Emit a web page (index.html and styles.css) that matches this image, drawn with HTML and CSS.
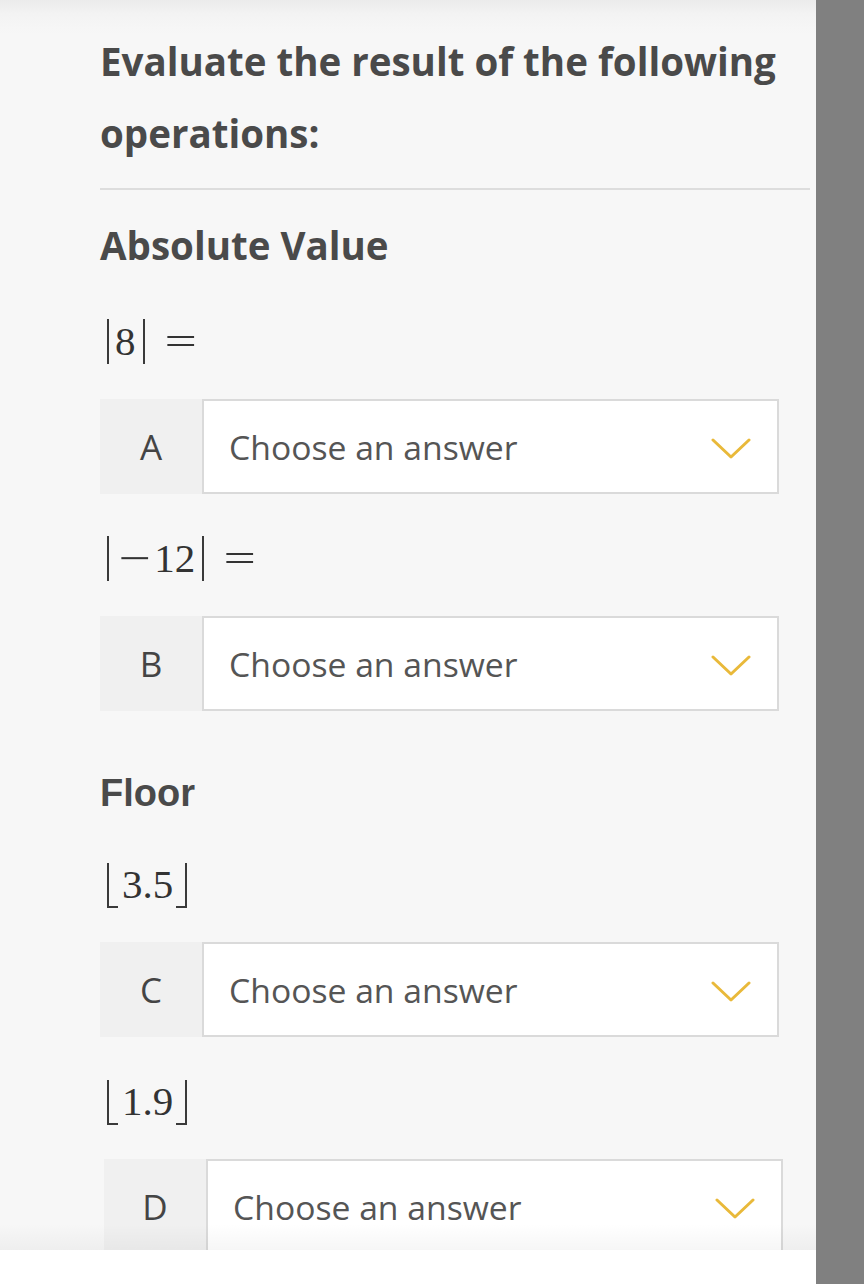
FILE: index.html
```html
<!DOCTYPE html>
<html lang="en">
<head>
<meta charset="utf-8">
<title>Evaluate</title>
<link rel="stylesheet" href="styles.css">
</head>
<body>
<div class="screen">
  <main class="page">
    <div class="content">
      <h1 class="title">Evaluate the result of the following operations:</h1>
      <hr class="divider">

      <h2 class="section">Absolute Value</h2>
      <div class="math"><span class="bar bar-l"></span>8<span class="bar bar-r"></span><span class="op eq">=</span></div>
      <div class="field">
        <div class="label">A</div>
        <div class="select"><span class="placeholder">Choose an answer</span>
          <svg class="chev" viewBox="0 0 40 22" width="40" height="22"><path d="M2 2 L20 19 L38 2" fill="none" stroke="#e9b93a" stroke-width="3" stroke-linecap="round" stroke-linejoin="round"/></svg>
        </div>
      </div>

      <div class="math math-next"><span class="bar bar-l"></span><span class="op minus">−</span>12<span class="bar bar-r"></span><span class="op eq">=</span></div>
      <div class="field">
        <div class="label">B</div>
        <div class="select"><span class="placeholder">Choose an answer</span>
          <svg class="chev" viewBox="0 0 40 22" width="40" height="22"><path d="M2 2 L20 19 L38 2" fill="none" stroke="#e9b93a" stroke-width="3" stroke-linecap="round" stroke-linejoin="round"/></svg>
        </div>
      </div>

      <h2 class="section section-alt">Floor</h2>
      <div class="math"><span class="fl fl-l"></span>3.5<span class="fl fl-r"></span></div>
      <div class="field">
        <div class="label">C</div>
        <div class="select"><span class="placeholder">Choose an answer</span>
          <svg class="chev" viewBox="0 0 40 22" width="40" height="22"><path d="M2 2 L20 19 L38 2" fill="none" stroke="#e9b93a" stroke-width="3" stroke-linecap="round" stroke-linejoin="round"/></svg>
        </div>
      </div>

      <div class="math math-next"><span class="fl fl-l"></span>1.9<span class="fl fl-r"></span></div>
      <div class="field field-shift">
        <div class="label">D</div>
        <div class="select"><span class="placeholder">Choose an answer</span>
          <svg class="chev" viewBox="0 0 40 22" width="40" height="22"><path d="M2 2 L20 19 L38 2" fill="none" stroke="#e9b93a" stroke-width="3" stroke-linecap="round" stroke-linejoin="round"/></svg>
        </div>
      </div>
    </div>
    <div class="fade"></div>
  </main>
  <aside class="rail"></aside>
</div>
</body>
</html>
```

FILE: styles.css
```css
html, body {
  margin: 0;
  padding: 0;
  background: #ffffff;
}

.screen {
  display: flex;
  width: 864px;
  height: 1284px;
  overflow: hidden;
}

.page {
  flex: 0 0 816px;
  display: flex;
  flex-direction: column;
  background: #ffffff;
}

.content {
  position: relative;
  height: 1250px;
  overflow: hidden;
  box-sizing: border-box;
  padding: 25px 6px 0 100px;
  background: linear-gradient(to bottom, #ebebeb 0px, #f3f3f3 14px, #f7f7f7 34px, #f7f7f7 100%);
  color: #4a4a4a;
  font-family: "Open Sans", "Liberation Sans", sans-serif;
}

.content::after {
  content: "";
  position: absolute;
  left: 0;
  right: 0;
  bottom: 0;
  height: 26px;
  background: linear-gradient(to bottom, rgba(0, 0, 0, 0), rgba(0, 0, 0, 0.035));
  pointer-events: none;
}

.fade {
  flex: 1;
  background: #ffffff;
}

.rail {
  flex: 0 0 48px;
  background: #808080;
}

.title {
  margin: 0;
  font-size: 38.5px;
  font-weight: 700;
  line-height: 72px;
  color: #4a4a4a;
}

.divider {
  margin: 19px 0 0 0;
  border: 0;
  height: 2px;
  background: #dddddd;
}

.section {
  margin: 31px 0 0 0;
  font-size: 38.5px;
  font-weight: 700;
  line-height: 48px;
  color: #4a4a4a;
}

.section-alt {
  margin-top: 58px;
  font-family: "Liberation Sans", Arial, sans-serif;
  font-size: 38px;
}

.math {
  margin-top: 42px;
  height: 60px;
  line-height: 60px;
  font-family: "Liberation Serif", "DejaVu Serif", serif;
  font-size: 41px;
  color: #333333;
  white-space: nowrap;
}

.section-alt + .math {
  margin-top: 37px;
}

.math-next {
  margin-top: 34px;
}

.op {
  display: inline-block;
  transform: scaleX(1.4);
}

.minus {
  margin: 0 8px 0 8px;
}

.eq {
  margin-left: 24px;
}

.bar {
  display: inline-block;
  width: 0;
  height: 45px;
  border-left: 2px solid #3a3a3a;
  vertical-align: -9px;
}

.bar-l {
  margin: 0 6px 0 7px;
}

.bar-r {
  margin-left: 7px;
}

.fl {
  display: inline-block;
  width: 9px;
  height: 43px;
  border-bottom: 2px solid #3a3a3a;
  vertical-align: -10px;
}

.fl-l {
  border-left: 2px solid #3a3a3a;
  margin: 0 4px 0 7px;
}

.fl-r {
  border-right: 2px solid #3a3a3a;
  margin-left: 3px;
}

.field {
  margin-top: 28px;
  display: flex;
  width: 679px;
  height: 95px;
}

.field-shift {
  margin-left: 4px;
}

.label {
  flex: 0 0 102px;
  background: #f0f0f0;
  display: flex;
  align-items: center;
  justify-content: center;
  font-size: 35px;
  color: #444444;
}

.select {
  flex: 1;
  box-sizing: border-box;
  background: #ffffff;
  border: 2px solid #dadada;
  display: flex;
  align-items: center;
  padding: 0 26px 0 25px;
}

.placeholder {
  flex: 1;
  font-size: 33.7px;
  color: #555555;
}

.chev {
  display: block;
  margin-top: 5px;
}
```
